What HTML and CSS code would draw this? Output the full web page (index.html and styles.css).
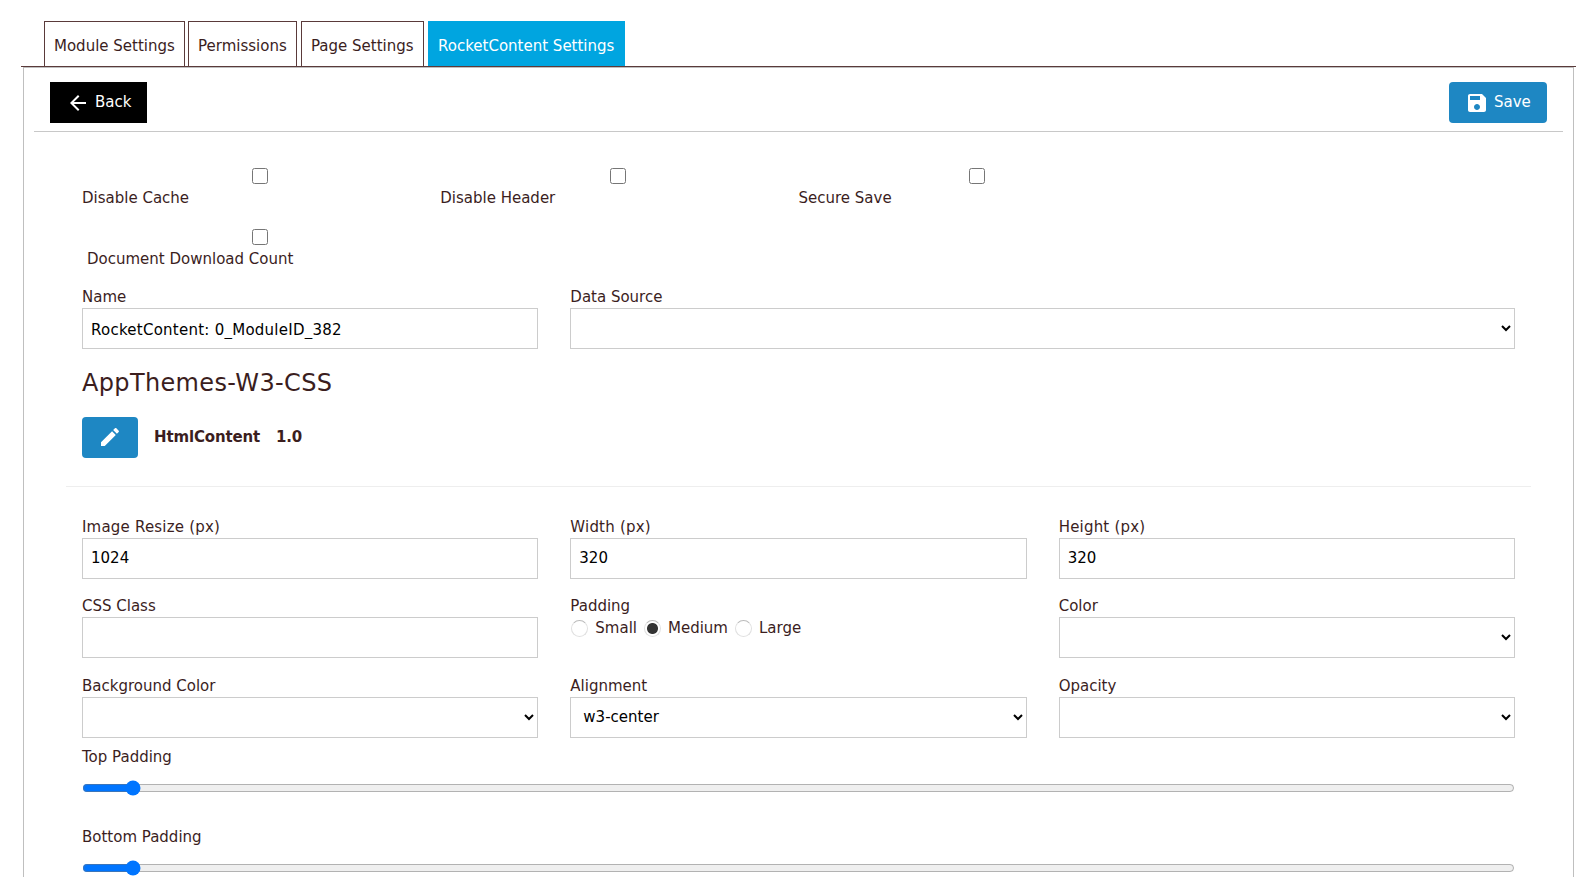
FILE: index.html
```html
<!DOCTYPE html>
<html lang="en">
<head>
    <meta charset="UTF-8">
    <meta name="viewport" content="width=device-width, initial-scale=1.0">
    <title>RocketContent Settings</title>
    <link rel="stylesheet" href="styles.css">
</head>
<body>
    <ul class="tabs">
        <li class="tab tab-module">Module Settings</li>
        <li class="tab tab-permissions">Permissions</li>
        <li class="tab tab-page">Page Settings</li>
        <li class="tab tab-rocket active">RocketContent Settings</li>
    </ul>

    <div class="panel">
        <div class="toolbar">
            <button class="button back">
                <svg class="icon" viewBox="0 0 24 24"><path d="M20 11H7.83l5.59-5.59L12 4l-8 8 8 8 1.41-1.41L7.83 13H20v-2z"/></svg>
                <span>Back</span>
            </button>
            <button class="button save">
                <svg class="icon" viewBox="0 0 24 24"><path fill-rule="evenodd" d="M17 3H5c-1.11 0-2 .9-2 2v14c0 1.1.89 2 2 2h14c1.1 0 2-.9 2-2V7l-4-4zm-5 16c-1.66 0-3-1.34-3-3s1.34-3 3-3 3 1.34 3 3-1.34 3-3 3zm3-10H5V5h10v4z"/></svg>
                <span>Save</span>
            </button>
        </div>

        <div class="content">
            <div class="checks">
                <div class="check"><input type="checkbox" id="cache"><label for="cache">Disable Cache</label></div>
                <div class="check"><input type="checkbox" id="header"><label for="header">Disable Header</label></div>
                <div class="check"><input type="checkbox" id="secure"><label for="secure">Secure Save</label></div>
                <div class="check check-count"><input type="checkbox" id="count"><label for="count">Document Download Count</label></div>
            </div>

            <div class="row">
                <div class="field">
                    <label>Name</label>
                    <input class="input name" type="text" value="RocketContent: 0_ModuleID_382">
                </div>
                <div class="field wide">
                    <label>Data Source</label>
                    <select class="input"><option></option></select>
                </div>
            </div>

            <h3>AppThemes-W3-CSS</h3>
            <div class="theme">
                <button class="button edit">
                    <svg class="icon" viewBox="0 0 24 24"><path d="M3 17.25V21h3.75L17.81 9.94l-3.75-3.75L3 17.25zM20.71 7.04c.39-.39.39-1.02 0-1.41l-2.34-2.34c-.39-.39-1.02-.39-1.41 0l-1.83 1.83 3.75 3.75 1.83-1.83z"/></svg>
                </button>
                <b>HtmlContent</b>
                <b>1.0</b>
            </div>
            <hr>

            <div class="row">
                <div class="field size">
                    <label>Image Resize (px)</label>
                    <input class="input" type="text" value="1024">
                </div>
                <div class="field size">
                    <label>Width (px)</label>
                    <input class="input" type="text" value="320">
                </div>
                <div class="field size">
                    <label>Height (px)</label>
                    <input class="input" type="text" value="320">
                </div>
                <div class="field">
                    <label>CSS Class</label>
                    <input class="input" type="text">
                </div>
                <div class="field">
                    <label>Padding</label>
                    <div class="radios">
                        <input type="radio" name="padding" id="small"><label for="small">Small</label>
                        <input type="radio" name="padding" id="medium" checked><label for="medium">Medium</label>
                        <input type="radio" name="padding" id="large"><label for="large">Large</label>
                    </div>
                </div>
                <div class="field">
                    <label>Color</label>
                    <select class="input"><option></option></select>
                </div>
                <div class="field">
                    <label>Background Color</label>
                    <select class="input"><option></option></select>
                </div>
                <div class="field">
                    <label>Alignment</label>
                    <select class="input"><option>w3-center</option></select>
                </div>
                <div class="field">
                    <label>Opacity</label>
                    <select class="input"><option></option></select>
                </div>
            </div>

            <div class="slider">
                <label>Top Padding</label>
                <input type="range" min="0" max="100" value="3">
            </div>
            <div class="slider">
                <label>Bottom Padding</label>
                <input type="range" min="0" max="100" value="3">
            </div>
        </div>
    </div>
</body>
</html>
```
FILE: styles.css
```css
* {
    box-sizing: border-box;
}

body {
    margin: 0;
    height: 877px;
    padding: 21px 10px 0 21px;
    overflow: hidden;
    font-family: Verdana, "DejaVu Sans", sans-serif;
    font-size: 15px;
    line-height: 22px;
    color: #3b1e1e;
    background: #fff;
}

/* Tabs */
.tabs {
    display: flex;
    height: 46px;
    margin: 0;
    padding: 0 0 0 23px;
    list-style: none;
    border-bottom: 1px solid #5a3a3a;
}

.tab {
    padding: 13px 0 0 9px;
    border: 1px solid #5a3a3a;
    border-bottom: none;
    white-space: nowrap;
}

.tab-module {
    width: 141px;
    margin-right: 3px;
}

.tab-permissions {
    width: 109px;
    margin-right: 4px;
}

.tab-page {
    width: 123px;
    margin-right: 4px;
}

.tab-rocket {
    width: 197px;
}

.tab.active {
    color: #fff;
    background: #00a5e0;
    border-color: #00a5e0;
}

/* Panel */
.panel {
    height: 810px;
    margin: 0 2px;
    padding: 0 10px;
    overflow: hidden;
    border: 1px solid #bfbfbf;
    border-bottom: none;
}

.toolbar {
    display: flex;
    justify-content: space-between;
    height: 64px;
    padding: 14px 16px 0;
    border-bottom: 1px solid #c8c8c8;
}

.button {
    display: flex;
    align-items: center;
    height: 41px;
    padding: 0 0 0 16px;
    font: inherit;
    color: #fff;
    border: none;
    border-radius: 4px;
    background: #1e87c3;
}

.icon {
    width: 24px;
    height: 24px;
    fill: currentColor;
}

.back {
    width: 97px;
    border-radius: 0;
    background: #000;
}

.save {
    width: 98px;
}

.back span,
.save span {
    margin: -2px 0 0 5px;
}

.edit {
    width: 56px;
}

.content {
    padding: 36px 32px 0;
}

.checks {
    display: grid;
    grid-template-columns: repeat(4, 1fr);
    row-gap: 4px;
    margin: 0 16px;
}

.check {
    height: 57px;
}

.check input {
    display: block;
    width: 16px;
    height: 16px;
    margin: 0 0 3px 170px;
}

.check-count {
    grid-column: 1;
}

.check-count label {
    margin-left: 5px;
}

/* Form */
.row {
    display: grid;
    grid-template-columns: repeat(3, 1fr);
    row-gap: 8px;
}

.field {
    padding: 0 16px;
    height: 71.4px;
}

.field.wide {
    grid-column: span 2;
}

.field > label,
.slider label {
    display: block;
}

.size > label {
    letter-spacing: 0.2px;
}

.input {
    display: block;
    width: 100%;
    height: 41px;
    padding: 8px;
    font: inherit;
    color: #000;
    border: 1px solid #ccc;
    border-radius: 0;
    background: #fff;
}

.name {
    padding-top: 10px;
    letter-spacing: 0.25px;
}

h3 {
    margin: 8px 16px 0;
    font-size: 24px;
    font-weight: 400;
    line-height: 36px;
    letter-spacing: 0.35px;
}

.theme {
    display: flex;
    margin: 15.6px 16px 0;
}

.theme b {
    margin: 9px 0 0 16px;
    letter-spacing: -0.15px;
}

hr {
    height: 1px;
    margin: 28px 0 29px;
    border: none;
    background: #eee;
}

.radios {
    display: flex;
    align-items: center;
}

.radios input {
    appearance: none;
    width: 17px;
    height: 17px;
    margin: 1px 7px 0 0;
    border: 1px solid #e0e0e0;
    border-top-color: #bbb;
    border-radius: 50%;
}

.radios input:first-child {
    margin-left: 1px;
}

.radios input:checked {
    background: radial-gradient(circle, #333 5px, #fff 6px);
}

.radios label {
    margin-right: 7px;
}

.slider {
    height: 80px;
    margin: 0 16px;
}

.slider input {
    display: block;
    width: 100%;
    height: 16px;
    margin: 12px 0 0;
}
```
